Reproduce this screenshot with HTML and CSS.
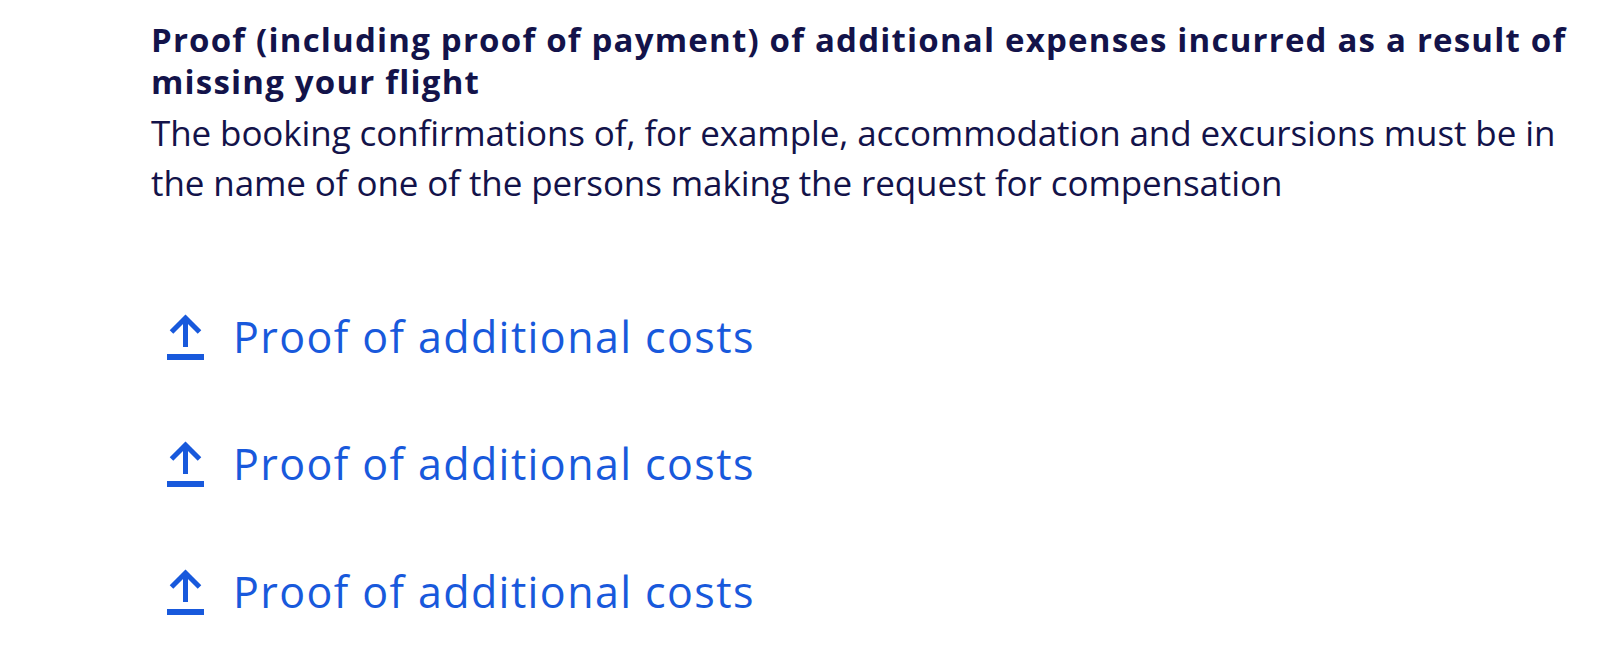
FILE: index.html
```html
<!DOCTYPE html>
<html lang="en">
<head>
    <meta charset="UTF-8">
    <title>Missed flight - documents</title>
    <link rel="stylesheet" href="styles.css">
</head>
<body>

    <section class="doc-section">
        <h3 class="doc-title">Proof (including proof of payment) of additional expenses incurred as a result of missing your flight</h3>
        <p class="doc-text">The booking confirmations of, for example, accommodation and excursions must be in the name of one of the persons making the request for compensation</p>

        <!-- upload buttons, one per passenger -->
        <div class="upload-list">
            <button class="upload-btn" type="button">
                <svg class="upload-icon" viewBox="0 0 37 46" aria-hidden="true">
                    <path d="M18.5 33V4M4.5 18L18.5 4l14 14" fill="none" stroke="currentColor" stroke-width="5"/>
                    <rect x="0" y="40" width="37" height="6" fill="currentColor"/>
                </svg>
                <span>Proof of additional costs</span>
            </button>
            <button class="upload-btn" type="button">
                <svg class="upload-icon" viewBox="0 0 37 46" aria-hidden="true">
                    <path d="M18.5 33V4M4.5 18L18.5 4l14 14" fill="none" stroke="currentColor" stroke-width="5"/>
                    <rect x="0" y="40" width="37" height="6" fill="currentColor"/>
                </svg>
                <span>Proof of additional costs</span>
            </button>
            <button class="upload-btn" type="button">
                <svg class="upload-icon" viewBox="0 0 37 46" aria-hidden="true">
                    <path d="M18.5 33V4M4.5 18L18.5 4l14 14" fill="none" stroke="currentColor" stroke-width="5"/>
                    <rect x="0" y="40" width="37" height="6" fill="currentColor"/>
                </svg>
                <span>Proof of additional costs</span>
            </button>
        </div>
    </section>

</body>
</html>
```

FILE: styles.css
```css
body {
    font-family: 'Open Sans', sans-serif;
    margin: 0;
    padding: 0;
    background-color: #fff;
    color: #13134a;
}

.doc-section {
    padding: 19px 0 0 151px;
}

.doc-title {
    margin: 0;
    font-size: 33px;
    line-height: 42px;
    font-weight: 700;
    letter-spacing: 1.2px;
}

.doc-text {
    margin: 5px 0 0;
    font-size: 35px;
    line-height: 50px;
    letter-spacing: -0.1px;
}

.upload-list {
    display: flex;
    flex-direction: column;
    gap: 67.5px;
    margin-top: 98.5px;
    padding-left: 16px;
}

.upload-btn {
    display: flex;
    align-items: center;
    gap: 29px;
    padding: 0;
    border: none;
    background: none;
    color: #1859dc;
    font-family: inherit;
    font-size: 43px;
    line-height: 60px;
    letter-spacing: 1.4px;
    cursor: pointer;
}

.upload-icon {
    width: 37px;
    height: 46px;
}
```
